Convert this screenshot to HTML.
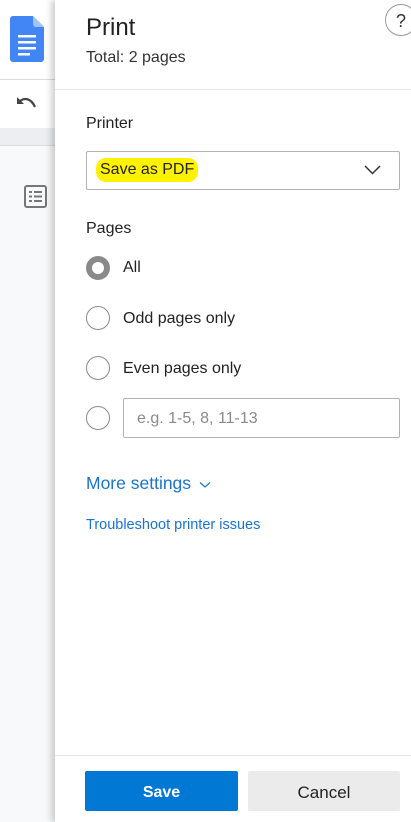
<!DOCTYPE html>
<html><head><meta charset="utf-8"><style>
*{margin:0;padding:0;box-sizing:border-box}
body{width:411px;height:822px;overflow:hidden;position:relative;font-family:"Liberation Sans",sans-serif;background:#f8f9fa}
.bg{position:absolute;left:0;top:0;width:60px;height:822px}
.panel{position:absolute;left:55px;top:0;width:356px;height:822px;background:#fff;box-shadow:-4px 0 6px rgba(0,0,0,0.18)}
.t{position:absolute;color:#222}
.radio{position:absolute;left:86px;width:24px;height:24px;border:1.5px solid #8a8a8a;border-radius:50%;background:#fff}
</style></head><body>
<div class="bg">
 <div style="position:absolute;left:0;top:0;width:60px;height:80px;background:#fff;border-bottom:1px solid #dadce0"></div>
 <div style="position:absolute;left:0;top:80px;width:60px;height:48px;background:#fff"></div>
 <div style="position:absolute;left:0;top:128px;width:60px;height:18px;background:#eceef1;border-bottom:1px solid #dadce0"></div>
 <svg style="position:absolute;left:10px;top:16px" width="34" height="46" viewBox="0 0 34 46"><path d="M3 0H23L34 11V43A3 3 0 0 1 31 46H3A3 3 0 0 1 0 43V3A3 3 0 0 1 3 0Z" fill="#4285f4"/><path d="M23 0L34 11H26A3 3 0 0 1 23 8Z" fill="#a1c2fa"/><rect x="8" y="19" width="18" height="2.5" fill="#fff"/><rect x="8" y="25" width="18" height="2.5" fill="#fff"/><rect x="8" y="31" width="18" height="2.5" fill="#fff"/><rect x="8" y="37" width="12" height="2.5" fill="#fff"/></svg>
 <svg style="position:absolute;left:16px;top:96px" width="22" height="14" viewBox="0 0 22 14"><path d="M3 6C8 1 15 2 19 11" stroke="#444" stroke-width="2.2" fill="none"/><path d="M1 1V8H8Z" fill="#444"/></svg>
 <svg style="position:absolute;left:24px;top:185px" width="23" height="23" viewBox="0 0 23 23"><rect x="1" y="1" width="21" height="21" rx="2" fill="none" stroke="#777" stroke-width="2"/><rect x="5" y="6" width="3" height="2" fill="#777"/><rect x="10" y="6" width="8" height="2" fill="#777"/><rect x="5" y="10.5" width="3" height="2" fill="#777"/><rect x="10" y="10.5" width="8" height="2" fill="#777"/><rect x="5" y="15" width="3" height="2" fill="#777"/><rect x="10" y="15" width="8" height="2" fill="#777"/></svg>
</div>
<div class="panel"></div>
<div class="t" style="left:86px;top:14px;font-size:24px">Print</div>
<div class="t" style="left:86px;top:49px;font-size:16px;color:#333">Total: 2 pages</div>
<div style="position:absolute;left:385px;top:4px;width:32px;height:32px;border:1px solid #999;border-radius:50%;font-size:18px;color:#333;padding-left:10px;padding-top:6px">?</div>
<div style="position:absolute;left:55px;top:89px;width:356px;height:1px;background:#e6e6e6"></div>
<div class="t" style="left:86px;top:115px;font-size:16px">Printer</div>
<div style="position:absolute;left:86px;top:151px;width:314px;height:39px;border:1px solid #b3b3b3;border-radius:2px"></div>
<div class="t" style="left:96px;top:158px;font-size:16px;background:#fff200;padding:3px 4px;border-radius:10px">Save as PDF</div>
<svg style="position:absolute;left:364px;top:165px" width="17" height="10" viewBox="0 0 17 10"><path d="M1 1L8.5 8.5L16 1" stroke="#333" stroke-width="1.5" fill="none"/></svg>
<div class="t" style="left:86px;top:220px;font-size:16px">Pages</div>
<div class="radio" style="top:256px;border:6px solid #8a8a8a"></div>
<div class="t" style="left:123px;top:259px;font-size:16px">All</div>
<div class="radio" style="top:306px"></div>
<div class="t" style="left:123px;top:310px;font-size:16px">Odd pages only</div>
<div class="radio" style="top:356px"></div>
<div class="t" style="left:123px;top:360px;font-size:16px">Even pages only</div>
<div class="radio" style="top:406px"></div>
<div style="position:absolute;left:123px;top:398px;width:277px;height:40px;border:1px solid #b3b3b3;border-radius:2px"></div>
<div class="t" style="left:137px;top:410px;font-size:16px;color:#8a8a8a">e.g. 1-5, 8, 11-13</div>
<div class="t" style="left:86px;top:473px;font-size:17.5px;color:#1a73d1">More settings</div>
<svg style="position:absolute;left:199px;top:481px" width="12" height="8" viewBox="0 0 12 8"><path d="M1 1.5L6 6L11 1.5" stroke="#1a73d1" stroke-width="1.2" fill="none"/></svg>
<div class="t" style="left:86px;top:517px;font-size:14.5px;color:#1a73d1">Troubleshoot printer issues</div>
<div style="position:absolute;left:55px;top:755px;width:356px;height:1px;background:#e6e6e6"></div>
<div style="position:absolute;left:85px;top:771px;width:153px;height:40px;background:#0078d4;border-radius:2px;color:#fff;font-weight:bold;font-size:16px;text-align:center;line-height:44px">Save</div>
<div style="position:absolute;left:248px;top:771px;width:152px;height:40px;background:#ebebeb;border-radius:2px;color:#222;font-size:17px;text-align:center;line-height:44px">Cancel</div>
</body></html>
